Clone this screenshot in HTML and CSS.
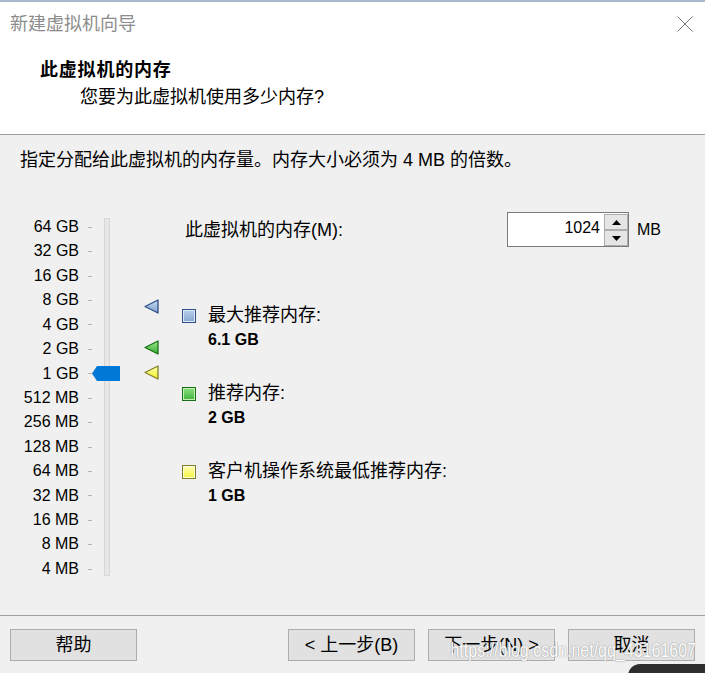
FILE: index.html
```html
<!DOCTYPE html>
<html lang="zh-CN">
<head>
<meta charset="utf-8">
<title>新建虚拟机向导</title>
<link rel="stylesheet" href="styles.css">
</head>
<body>
<div class="window">
  <div class="accent"></div>
  <header class="header">
    <div class="titlebar">
      <span class="title">新建虚拟机向导</span>
      <svg class="close" width="16" height="16" viewBox="0 0 16 16"><path d="M0.5 0.5 L15.5 15.5 M15.5 0.5 L0.5 15.5" stroke="#7a7a7a" stroke-width="1" fill="none"/></svg>
    </div>
    <h1 class="heading">此虚拟机的内存</h1>
    <p class="subheading">您要为此虚拟机使用多少内存?</p>
  </header>

  <main class="content">
    <p class="intro">指定分配给此虚拟机的内存量。内存大小必须为 4 MB 的倍数。</p>
    <div class="main">
      <div class="slider">
        <ul class="scale">
          <li class="tick">64 GB</li>
          <li class="tick">32 GB</li>
          <li class="tick">16 GB</li>
          <li class="tick">8 GB</li>
          <li class="tick">4 GB</li>
          <li class="tick">2 GB</li>
          <li class="tick">1 GB</li>
          <li class="tick">512 MB</li>
          <li class="tick">256 MB</li>
          <li class="tick">128 MB</li>
          <li class="tick">64 MB</li>
          <li class="tick">32 MB</li>
          <li class="tick">16 MB</li>
          <li class="tick">8 MB</li>
          <li class="tick">4 MB</li>
        </ul>
        <div class="track"></div>
        <svg class="thumb" width="28" height="15" viewBox="0 0 28 15"><polygon points="0,7.5 5,0 28,0 28,15 5,15" fill="#0078d7"/></svg>
      </div>

      <div class="markers">
        <svg class="marker marker-max" width="15" height="15" viewBox="0 0 15 15">
          <defs><linearGradient id="gb" x1="0" y1="0" x2="0" y2="1"><stop offset="0" stop-color="#c9dcf2"/><stop offset="1" stop-color="#7d9fcf"/></linearGradient></defs>
          <polygon points="1,7.5 14,1 14,14" fill="url(#gb)" stroke="#2f4f86" stroke-width="1.3" stroke-linejoin="round"/>
        </svg>
        <svg class="marker marker-rec" width="15" height="15" viewBox="0 0 15 15">
          <defs><linearGradient id="gg" x1="0" y1="0" x2="0" y2="1"><stop offset="0" stop-color="#9fe68f"/><stop offset="1" stop-color="#2fae2f"/></linearGradient></defs>
          <polygon points="1,7.5 14,1 14,14" fill="url(#gg)" stroke="#187018" stroke-width="1.3" stroke-linejoin="round"/>
        </svg>
        <svg class="marker marker-min" width="15" height="15" viewBox="0 0 15 15">
          <defs><linearGradient id="gy" x1="0" y1="0" x2="0" y2="1"><stop offset="0" stop-color="#ffffb0"/><stop offset="1" stop-color="#f0f020"/></linearGradient></defs>
          <polygon points="1,7.5 14,1 14,14" fill="url(#gy)" stroke="#7f7f2a" stroke-width="1.3" stroke-linejoin="round"/>
        </svg>
      </div>

      <div class="panel">
        <div class="memory-row">
          <label class="memory-label">此虚拟机的内存(M):</label>
          <div class="spin">
            <span class="spin-value">1024</span>
            <div class="spin-buttons">
              <span class="spin-btn"><svg width="9" height="5" viewBox="0 0 9 5"><polygon points="0,5 4.5,0 9,5" fill="#000"/></svg></span>
              <span class="spin-btn"><svg width="9" height="5" viewBox="0 0 9 5"><polygon points="0,0 9,0 4.5,5" fill="#000"/></svg></span>
            </div>
          </div>
          <span class="unit">MB</span>
        </div>

        <ul class="legend">
          <li class="legend-item">
            <span class="swatch swatch-max"></span>
            <div class="legend-text">
              <div class="legend-label">最大推荐内存:</div>
              <div class="legend-value">6.1 GB</div>
            </div>
          </li>
          <li class="legend-item">
            <span class="swatch swatch-rec"></span>
            <div class="legend-text">
              <div class="legend-label">推荐内存:</div>
              <div class="legend-value">2 GB</div>
            </div>
          </li>
          <li class="legend-item">
            <span class="swatch swatch-min"></span>
            <div class="legend-text">
              <div class="legend-label">客户机操作系统最低推荐内存:</div>
              <div class="legend-value">1 GB</div>
            </div>
          </li>
        </ul>
      </div>
    </div>
  </main>

  <footer class="footer">
    <button class="btn">帮助</button>
    <div class="btn-group">
      <button class="btn">&lt; 上一步(B)</button>
      <button class="btn">下一步(N) &gt;</button>
      <button class="btn">取消</button>
    </div>
  </footer>

  <div class="watermark">https://blog.csdn.net/qq_43161607</div>
  <div class="corner-blob"></div>
</div>
</body>
</html>
```

FILE: styles.css
```css
* { box-sizing: border-box; }

html, body {
  margin: 0;
  padding: 0;
}

body {
  width: 705px;
  height: 673px;
  overflow: hidden;
  background: #f0f0f0;
  font-family: "Liberation Sans", "Noto Sans CJK SC", sans-serif;
  font-size: 16px;
  color: #000;
}

.window {
  position: relative;
  width: 705px;
  height: 673px;
  display: flex;
  flex-direction: column;
  overflow: hidden;
}

.accent {
  height: 2px;
  background: #a9b8cc;
}

.header {
  background: #fff;
  border-bottom: 1px solid #a0a0a0;
  padding-bottom: 25px;
}

.titlebar {
  height: 44px;
  display: flex;
  align-items: center;
  justify-content: space-between;
  padding: 0 12px 0 10px;
}

.title {
  font-size: 18px;
  line-height: 24px;
  color: #8c8c8c;
}

.close {
  display: block;
}

.heading {
  margin: 12px 0 0 40px;
  font-size: 18px;
  line-height: 24px;
  font-weight: bold;
  letter-spacing: 0.8px;
}

.subheading {
  margin: 3px 0 0 80px;
  font-size: 18px;
  line-height: 24px;
}

.content {
  flex: 1;
}

.intro {
  margin: 13px 0 0 20px;
  font-size: 18px;
  line-height: 24px;
  letter-spacing: 0;
}

.main {
  margin-top: 40px;
  display: flex;
  align-items: flex-start;
}

.slider {
  position: relative;
  display: flex;
  align-items: flex-start;
  width: 110px;
}

.scale {
  list-style: none;
  margin: 0;
  padding: 3px 0 0 0;
  width: 92px;
}

.tick {
  height: 24.43px;
  line-height: 24.43px;
  display: flex;
  align-items: center;
  justify-content: flex-end;
  white-space: nowrap;
}

.tick::after {
  content: "";
  width: 4px;
  height: 1px;
  margin-left: 9px;
  background: #b4b4b4;
}

.track {
  margin-left: 12px;
  margin-top: 6px;
  width: 6px;
  height: 358px;
  border: 1px solid #d6d6d6;
  background: #e7e7e7;
}

.thumb {
  position: absolute;
  left: 92px;
  top: 154px;
}

.markers {
  position: relative;
  margin-left: 34px;
  width: 15px;
  height: 360px;
}

.marker {
  position: absolute;
  left: 0;
}

.marker-max { top: 87px; }
.marker-rec { top: 128px; }
.marker-min { top: 153px; }

.panel {
  margin-left: 23px;
}

.memory-row {
  display: grid;
  grid-template-columns: 325px 122px auto;
  align-items: center;
  height: 35px;
}

.memory-label {
  padding-left: 3px;
  font-size: 18px;
  line-height: 24px;
  white-space: nowrap;
}

.spin {
  display: flex;
  height: 35px;
  border: 1px solid #7a7a7a;
  background: #fff;
}

.spin-value {
  flex: 1;
  text-align: right;
  padding-right: 4px;
  line-height: 30px;
}

.spin-buttons {
  width: 24px;
  margin-top: 1px;
  display: flex;
  flex-direction: column;
}

.spin-btn {
  height: 16px;
  display: flex;
  align-items: center;
  justify-content: center;
  background: #e5e5e5;
  border: 1px solid #adadad;
}

.spin-btn svg { display: block; }

.unit {
  margin-left: 8px;
  line-height: 24px;
}

.legend {
  list-style: none;
  margin: 56px 0 0 0;
  padding: 0;
  display: flex;
  flex-direction: column;
  gap: 29px;
}

.legend-item {
  display: flex;
  align-items: flex-start;
}

.swatch {
  width: 14px;
  height: 14px;
  margin-top: 6px;
  border: 1px solid;
  flex: none;
}

.swatch-max {
  background: linear-gradient(#b9cfeb, #86a6d2);
  border-color: #2f4f86;
  box-shadow: inset 0 0 0 1px #dde8f6;
}

.swatch-rec {
  background: linear-gradient(#8fe07f, #3fb43f);
  border-color: #187018;
  box-shadow: inset 0 0 0 1px #c4f0b8;
}

.swatch-min {
  background: linear-gradient(#ffffb8, #f4f43a);
  border-color: #7f7f2a;
  box-shadow: inset 0 0 0 1px #ffffe0;
}

.legend-text {
  margin-left: 12px;
}

.legend-label {
  font-size: 18px;
  line-height: 24px;
  white-space: nowrap;
}

.legend-value {
  font-weight: bold;
  line-height: 24px;
  margin-top: 1px;
}

.footer {
  height: 58px;
  border-top: 1px solid #a0a0a0;
  padding: 13px 10px 12px 10px;
  display: flex;
  justify-content: space-between;
}

.btn-group {
  display: flex;
  gap: 13px;
}

.btn {
  width: 127px;
  height: 32px;
  margin: 0;
  padding: 0;
  background: #e1e1e1;
  border: 1px solid #adadad;
  font-family: "Liberation Sans", "Noto Sans CJK SC", sans-serif;
  font-size: 18px;
  line-height: 30px;
  color: #000;
}

.watermark {
  position: absolute;
  right: 9px;
  bottom: 10px;
  font-family: "Liberation Sans", sans-serif;
  font-size: 16px;
  line-height: 20px;
  color: #fff;
  text-shadow: 0 0 1px #9a9a9a, 0 0 1px #9a9a9a;
  transform: scaleY(1.3);
  transform-origin: right bottom;
  opacity: 0.95;
}

.corner-blob {
  position: absolute;
  left: 628px;
  top: 664px;
  width: 100px;
  height: 30px;
  border-radius: 12px;
  background: #2e2e2e;
}
```
